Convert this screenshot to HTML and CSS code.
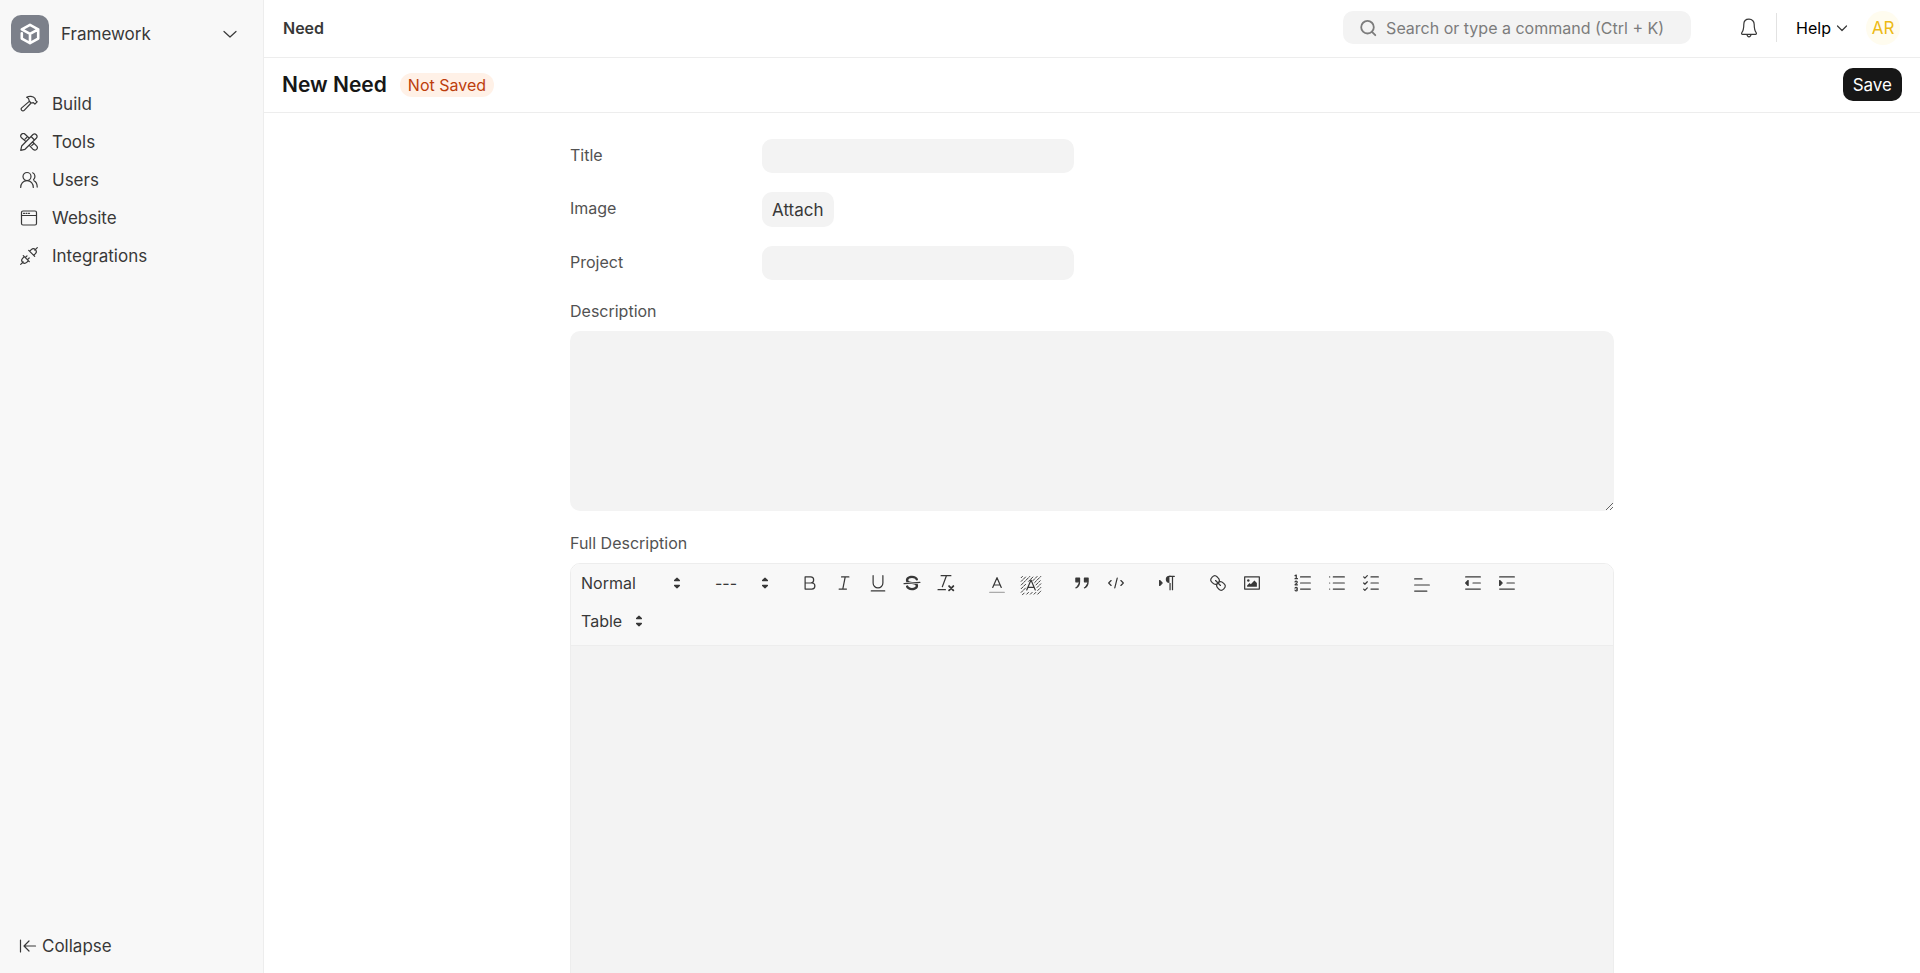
FILE: index.html
```html
<!DOCTYPE html>
<html lang="en">
<head>
    <meta charset="UTF-8">
    <title>New Need</title>
    <link rel="stylesheet" href="styles.css">
</head>
<body>
    <div class="layout">
        <aside class="sidebar">
            <button class="app-switcher" type="button">
                <svg class="app-logo" viewBox="0 0 38 38">
                    <rect width="38" height="38" rx="10" fill="#7c808a"/>
                    <path d="M10.8 14.300L19 9.900l8.200 4.400-8.200 4.600zM27.200 14.300v9.300L19 28.200l-8.200-4.600v-5.400M19 18.900v9.300" fill="none" stroke="#fff" stroke-width="2.6"/>
                </svg>
                <span class="app-name">Framework</span>
                <svg class="icon" viewBox="0 0 18 18"><path d="M3 6.500l6 5.500 6-5.500"/></svg>
            </button>
            <nav class="menu">
                <a href="#build">
                    <svg class="icon" viewBox="0 0 18 18"><path d="M9.300 6.400L1.700 12.900a1.700 1.700 0 0 0 0 2.400 1.700 1.700 0 0 0 2.500 0l6.900-7.300M6.600 2.200c2.600-1.300 6.400-1.100 8.400 1.100l.5 2.100 1.600 1.400-2.200 2.400-1.500-1.500-2.300.3-2-2c.2-1.600-.6-3.100-2.500-3.800z"/></svg>
                    Build
                </a>
                <a href="#tools">
                    <svg class="icon" viewBox="0 0 18 18"><path d="M13 1.500a2.500 2.500 0 0 1 3.500 3.500L5 16.300l-4.300 1 1-4.300zM11 3.500L14.500 7M6 8.600L1.500 4.800a2.500 2.500 0 0 1 3.600-3.500L9.300 5.200M5 6.200l1.700-1.700M9.300 12.300l4 4.300a2.500 2.500 0 0 0 3.500-3.500L12.700 9M11.700 12.700l1.700-1.700"/></svg>
                    Tools
                </a>
                <a href="#users">
                    <svg class="icon" viewBox="0 0 18 18"><path d="M.7 16.500c0-4 2.400-6.800 6.300-6.800s6.300 2.800 6.300 6.800M14 9.700c2 1 3.200 3.200 3.200 6.400M12.700 1.800c2.700 1.200 3 5 .8 6.900"/><circle cx="7" cy="5.500" r="4"/></svg>
                    Users
                </a>
                <a href="#website">
                    <svg class="icon" viewBox="0 0 18 18"><rect x="1.500" y="2" width="15" height="14" rx="1.500"/><path d="M1.500 6.500h15M3.500 4.300h1M6 4.300h1M8.500 4.300h1"/></svg>
                    Website
                </a>
                <a href="#integrations">
                    <svg class="icon" viewBox="0 0 18 18"><path d="M.7 17.300l2.500-2.500M17.300.7l-2.500 2.500M3.300 8.700l6 6M4.200 9.600l-1.600 1.700a2.900 2.900 0 0 0 4.100 4.100l1.700-1.600M5.300 10.500l1.700-1.700M7.500 12.700L9.200 11M8.700 3.300l6 6M9.600 4.200l1.700-1.600a2.900 2.900 0 0 1 4.100 4.100l-1.600 1.700"/></svg>
                    Integrations
                </a>
            </nav>
            <button class="collapse" type="button">
                <svg class="icon" viewBox="0 0 18 18"><path d="M1.500 3v12M16.500 9h-11M10 4L5 9l5 5"/></svg>
                Collapse
            </button>
        </aside>

        <main class="main">
            <header class="navbar">
                <a class="breadcrumb" href="#need">Need</a>
                <div class="navbar-right">
                    <label class="search">
                        <svg class="icon" viewBox="0 0 18 18"><circle cx="8.500" cy="8.200" r="6.300"/><path d="M13 12.800l3.300 3.400"/></svg>
                        <input type="text" aria-label="Search" placeholder="Search or type a command (Ctrl + K)">
                    </label>
                    <button class="bell" type="button" aria-label="Notifications">
                        <svg class="icon" viewBox="0 0 18 20"><path d="M9 1.200c-3.300 0-5.200 2.300-5.200 5.300 0 4-.5 6.200-2 8.200-.5.800-.2 1.600.7 1.600h13c.9 0 1.200-.8.700-1.600-1.500-2-2-4.200-2-8.200 0-3-1.900-5.300-5.200-5.300zM7 16.500c.2 1.600.9 2.300 2 2.300s1.800-.7 2-2.300"/></svg>
                    </button>
                    <span class="divider"></span>
                    <button class="help" type="button">
                        Help
                        <svg class="icon" viewBox="0 0 12 12"><path d="M1.500 4L6 8.500 10.500 4"/></svg>
                    </button>
                    <button class="avatar" type="button">AR</button>
                </div>
            </header>

            <div class="page-head">
                <h1>New Need</h1>
                <span class="indicator">Not Saved</span>
                <button class="save" type="submit" form="needForm">Save</button>
            </div>

            <form class="form" id="needForm">
                <div class="field-row">
                    <label for="title">Title</label>
                    <input class="control" type="text" id="title">
                </div>
                <div class="field-row">
                    <label for="attach">Image</label>
                    <button class="attach" type="button" id="attach">Attach</button>
                </div>
                <div class="field-row">
                    <label for="project">Project</label>
                    <input class="control" type="text" id="project">
                </div>
                <div class="field">
                    <label for="description">Description</label>
                    <textarea class="control" id="description"></textarea>
                </div>
                <div class="field">
                    <label id="fullLabel">Full Description</label>
                    <div class="editor">
                        <div class="toolbar">
                            <div class="group">
                                <div class="picker picker-header">
                                    <select aria-label="Heading"><option>Normal</option><option>Heading 1</option></select>
                                    <svg viewBox="0 0 18 18"><path class="fill" d="M7 11l2 2 2-2zM7 7l2-2 2 2z"/></svg>
                                </div>
                            </div>
                            <div class="group">
                                <div class="picker picker-size">
                                    <select aria-label="Size"><option>---</option><option>12px</option></select>
                                    <svg viewBox="0 0 18 18"><path class="fill" d="M7 11l2 2 2-2zM7 7l2-2 2 2z"/></svg>
                                </div>
                            </div>
                            <div class="group">
                                <button type="button" aria-label="Bold"><svg viewBox="0 0 18 18"><path d="M5 4h4.500a2.500 2.500 0 0 1 0 5H5zM5 9h5.500a2.500 2.500 0 0 1 0 5H5z"/></svg></button>
                                <button type="button" aria-label="Italic"><svg viewBox="0 0 18 18"><path d="M7 4h6M5 14h6M8 14l2-10"/></svg></button>
                                <button type="button" aria-label="Underline"><svg viewBox="0 0 18 18"><path d="M5 3v6a4 4 0 0 0 8 0V3"/><rect class="solid" x="3" y="15" width="12" height="1" rx=".5"/></svg></button>
                                <button type="button" aria-label="Strike"><svg viewBox="0 0 18 18"><path d="M15.500 8.500l-13 1"/><path class="solid" d="M9.007 8C6.542 7.791 6 7.519 6 6.500 6 5.792 7.283 5 9 5c1.571 0 2.765.679 2.969 1.309a1 1 0 0 0 1.900-.617C13.356 4.106 11.354 3 9 3 6.200 3 4 4.538 4 6.500a3.200 3.200 0 0 0 .5 1.843zM8.984 10C11.457 10.208 12 10.479 12 11.500c0 .708-1.283 1.500-3 1.500-1.571 0-2.765-.679-2.969-1.309a1 1 0 1 0-1.900.617C4.644 13.894 6.646 15 9 15c2.800 0 5-1.538 5-3.500a3.200 3.200 0 0 0-.5-1.843z"/></svg></button>
                                <button type="button" aria-label="Clear formatting"><svg viewBox="0 0 18 18"><path d="M5 3h8M6 12l3.350-9"/><path d="M11.500 11.500l3.500 3.500M15 11.500L11.500 15" stroke-width="1.500"/><rect class="solid" x="2" y="14" width="7" height="1" rx=".5"/></svg></button>
                            </div>
                            <div class="group">
                                <button class="low" type="button" aria-label="Text color"><svg viewBox="0 0 18 18"><path d="M3 15h12" opacity=".4"/><path d="M5.500 11L9 3l3.500 8M6.380 9h5.250"/></svg></button>
                                <button class="low" type="button" aria-label="Background color"><svg viewBox="0 0 18 18"><path class="hatch" d="M1 3l1-1M1 6l4-4M1 9l7-7M7 6l4-4M1 12l4-4M10.500 5.500L14 2M12 7l5-5M13 9l4-4M1 15l3.500-3.500M14 11l3-3M14.500 13.500L17 11M2 17l2-2M5.500 16.500L7 15M8.500 16.500L10 15M11.500 16.500L13 15M14.500 16.500L17 14"/><path d="M5.500 13L9 5l3.500 8M6.380 11h5.250"/></svg></button>
                            </div>
                            <div class="group">
                                <button type="button" aria-label="Quote"><svg viewBox="0 0 18 18"><path class="fill" d="M4 5h3v3H4zM11 5h3v3h-3zM7 8c0 4.031-3 5-3 5M14 8c0 4.031-3 5-3 5"/></svg></button>
                                <button type="button" aria-label="Code"><svg viewBox="0 0 18 18"><path d="M5 7L3 9l2 2M13 7l2 2-2 2M10 5L8 13"/></svg></button>
                            </div>
                            <div class="group">
                                <button type="button" aria-label="Direction"><svg viewBox="0 0 18 18"><path class="fill" d="M3 11l2-2-2-2z"/><path d="M15 3.500h-4"/><path class="solid" d="M11 3a3 3 0 0 0 0 6h1V3zM11 4h1v11h-1zM13 4h1v11h-1z"/></svg></button>
                            </div>
                            <div class="group">
                                <button type="button" aria-label="Link"><svg viewBox="0 0 18 18"><path d="M7 7l4 4M8.900 4.577a3.476 3.476 0 0 1 .36 4.679A3.476 3.476 0 0 1 4.577 8.900C3.185 7.500 2.035 6.400 4.217 4.217S7.500 3.185 8.900 4.577zM13.423 9.100a3.476 3.476 0 0 0-4.679-.36 3.476 3.476 0 0 0 .36 4.679c1.392 1.392 2.500 2.542 4.679.36S14.815 10.500 13.423 9.100z"/></svg></button>
                                <button type="button" aria-label="Image"><svg viewBox="0 0 18 18"><rect x="3" y="4" width="12" height="10"/><circle class="solid" cx="6" cy="7" r="1"/><path class="solid" d="M5 12v-1l2-2 1 1 3-3 2 2v3z"/></svg></button>
                            </div>
                            <div class="group">
                                <button type="button" aria-label="Ordered list"><svg viewBox="0 0 18 18"><path d="M7 4h8M7 9h8M7 14h8"/><path d="M2.500 3l1-.500v3M2.500 5.500h2M4.500 10.500h-2c0-.234 1.850-1.076 1.850-2.234a.959.959 0 0 0-1.850-.11M2.500 14.846a.959.959 0 0 0 1.850-.109.7.7 0 0 0-.6-.737.688.688 0 0 0 .6-.736.959.959 0 0 0-1.850-.109"/></svg></button>
                                <button type="button" aria-label="Bullet list"><svg viewBox="0 0 18 18"><path d="M6 4h9M6 9h9M6 14h9M3 4h0M3 9h0M3 14h0"/></svg></button>
                                <button type="button" aria-label="Check list"><svg viewBox="0 0 18 18"><path d="M9 4h6M9 9h6M9 14h6M3 4l1 1 2-2M3 9l1 1 2-2M3 14l1 1 2-2"/></svg></button>
                            </div>
                            <div class="group">
                                <button class="low" type="button" aria-label="Align"><svg viewBox="0 0 18 18"><path d="M3 4h6M3 9h12M3 14h10"/></svg></button>
                            </div>
                            <div class="group">
                                <button type="button" aria-label="Outdent"><svg viewBox="0 0 18 18"><path d="M3 4h12M9 9h6M3 14h12"/><path class="fill" d="M5 7v4L3 9z"/></svg></button>
                                <button type="button" aria-label="Indent"><svg viewBox="0 0 18 18"><path d="M3 4h12M9 9h6M3 14h12"/><path class="fill" d="M3 7v4l2-2z"/></svg></button>
                            </div>
                            <div class="group group-table">
                                <div class="picker picker-table">
                                    <select aria-label="Table"><option>Table</option><option>Insert Table</option></select>
                                    <svg viewBox="0 0 18 18"><path class="fill" d="M7 11l2 2 2-2zM7 7l2-2 2 2z"/></svg>
                                </div>
                            </div>
                        </div>
                        <div class="editor-body" contenteditable="true" role="textbox" aria-multiline="true" aria-labelledby="fullLabel"></div>
                    </div>
                </div>
            </form>
        </main>
    </div>
</body>
</html>
```

FILE: styles.css
```css
* {
    box-sizing: border-box;
}
html {
    scrollbar-width: none;
}
body {
    margin: 0;
    font-family: Inter, sans-serif;
    font-size: 16px;
    line-height: 24px;
    color: #383838;
    background: #fff;
}
button, input, textarea, select {
    font: inherit;
    color: inherit;
    border: none;
    background: none;
    padding: 0;
    margin: 0;
}
button {
    cursor: pointer;
}
a {
    color: inherit;
    text-decoration: none;
}
svg {
    display: block;
    flex: none;
    fill: none;
    stroke: #383838;
    stroke-linecap: round;
    stroke-linejoin: round;
}
.icon {
    width: 18px;
    height: 18px;
    stroke-width: 1.2;
}
.layout {
    display: flex;
    align-items: flex-start;
}

/* sidebar */
.sidebar {
    position: sticky;
    top: 0;
    flex: none;
    width: 264px;
    height: 100vh;
    display: flex;
    flex-direction: column;
    padding: 15px 10px;
    font-size: 17px;
    background: #f8f8f8;
    border-right: 1px solid #ededed;
}
.app-switcher {
    display: flex;
    align-items: center;
    gap: 12px;
    padding: 0 14px 0 1px;
    text-align: left;
}
.app-logo {
    width: 38px;
    height: 38px;
    stroke: none;
}
.app-name {
    flex: 1;
}
.menu {
    display: flex;
    flex-direction: column;
    margin-top: 32px;
}
.menu a {
    display: flex;
    align-items: center;
    gap: 14px;
    height: 38px;
    padding-left: 10px;
}
.collapse {
    display: flex;
    align-items: center;
    gap: 5px;
    margin-top: auto;
    padding-left: 9px;
}

/* top bars */
.main {
    flex: 1;
    min-width: 0;
}
.navbar {
    display: flex;
    align-items: center;
    justify-content: space-between;
    height: 58px;
    padding: 0 20px 2px 19px;
    border-bottom: 1px solid #ededed;
}
.breadcrumb {
    font-weight: 600;
}
.navbar-right {
    display: flex;
    align-items: center;
}
.search {
    display: flex;
    align-items: center;
    gap: 9px;
    width: 348px;
    height: 33px;
    padding: 0 16px;
    margin-right: 49px;
    border-radius: 10px;
    background: #f3f3f3;
}
.search .icon {
    stroke: #7c7c7c;
    stroke-width: 1.8;
}
.search input {
    flex: 1;
    min-width: 0;
    outline: none;
}
.search input::placeholder {
    color: #7c7c7c;
    opacity: 1;
}
.bell .icon {
    height: 20px;
}
.divider {
    width: 1px;
    height: 29px;
    margin: 0 19px 0 18px;
    background: #e2e2e2;
}
.help {
    display: flex;
    align-items: center;
    gap: 5px;
    margin-right: 18px;
    color: #000;
}
.help .icon {
    width: 12px;
    height: 12px;
}
.avatar {
    width: 34px;
    height: 34px;
    border-radius: 50%;
    font-size: 17px;
    background: #fffcef;
    color: #edba13;
}
.page-head {
    display: flex;
    align-items: center;
    height: 55px;
    padding: 0 18px 1px;
    border-bottom: 1px solid #ededed;
}
.page-head h1 {
    margin: 0;
    font-size: 21px;
    font-weight: 600;
    color: #171717;
}
.indicator {
    margin-left: 13px;
    padding: 0 8px;
    border-radius: 12px;
    background: #fff1e7;
    color: #bd3e0c;
}
.save {
    height: 33px;
    margin-left: auto;
    padding: 0 10px;
    border-radius: 10px;
    font-size: 17px;
    background: #171717;
    color: #fff;
}

/* form */
.form {
    max-width: 1044px;
    margin: 0 auto;
    padding: 26px 0 36px;
}
.field-row {
    display: grid;
    grid-template-columns: 192px 312px;
    margin-bottom: 19px;
}
.field-row label {
    padding-top: 4px;
}
label {
    color: #525252;
}
.control {
    height: 34px;
    padding: 0 10px;
    border-radius: 10px;
    background: #f3f3f3;
    outline: none;
}
.attach {
    justify-self: start;
    height: 35px;
    padding: 0 10px;
    border-radius: 10px;
    font-size: 17px;
    background: #f3f3f3;
}
.field {
    display: flex;
    flex-direction: column;
    gap: 8px;
    margin-bottom: 20px;
}
textarea.control {
    width: 100%;
    height: 180px;
    padding: 8px 10px;
    resize: vertical;
}

/* rich text editor */
.editor {
    border: 1px solid #ededed;
    border-radius: 10px;
    overflow: hidden;
}
.toolbar {
    display: flex;
    flex-wrap: wrap;
    column-gap: 17px;
    padding-bottom: 5px;
    background: #f8f8f8;
    border-bottom: 1px solid #ededed;
}
.group {
    display: flex;
    align-items: center;
    height: 38px;
}
.group-table {
    flex-basis: 100%;
}
.toolbar svg {
    width: 22px;
    height: 22px;
}
.group button {
    display: flex;
    align-items: center;
    justify-content: center;
    width: 34px;
    height: 30px;
}
.group button.low {
    padding-top: 4px;
}
.picker {
    position: relative;
}
.picker select {
    width: 100%;
    height: 30px;
    padding-left: 10px;
    appearance: none;
    outline: none;
}
.picker svg {
    position: absolute;
    top: 4px;
    right: 0;
    pointer-events: none;
}
.picker-header {
    width: 117px;
}
.picker-size {
    width: 71px;
}
.picker-table {
    width: 79px;
}
.fill {
    fill: #383838;
}
.solid {
    fill: #383838;
    stroke: none;
}
.hatch {
    stroke-width: 0.8;
    stroke-dasharray: 2 1;
}
.editor-body {
    min-height: 360px;
    padding: 14px 18px;
    background: #f3f3f3;
    outline: none;
}
```
